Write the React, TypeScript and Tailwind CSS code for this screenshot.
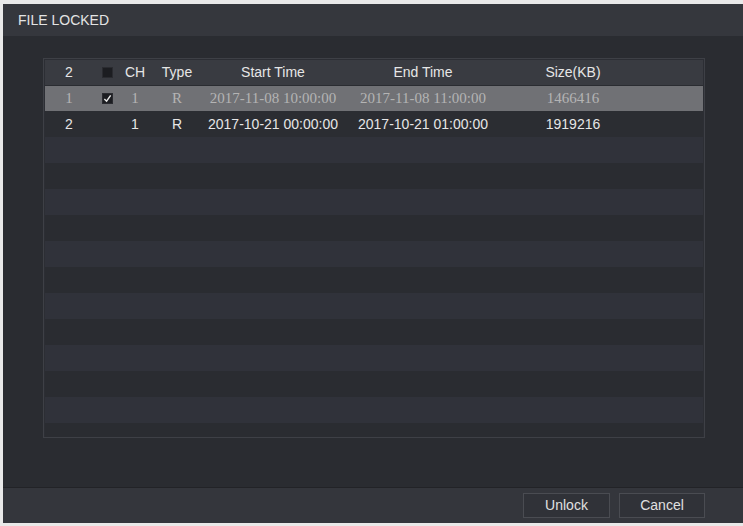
import React from "react";

const cols = [
  "w-[48px]",
  "w-[28px]",
  "w-[28px]",
  "w-[56px]",
  "w-[136px]",
  "w-[164px]",
  "w-[136px]",
];

const Checkbox = ({ checked }: { checked?: boolean }) => (
  <div className="w-[11px] h-[11px] bg-[#1c1d21] border border-[#2a2b30] flex items-center justify-center">
    {checked && (
      <svg width="9" height="9" viewBox="0 0 10 10">
        <path d="M1.5 5.5 L4 8 L8.5 1.5" stroke="#e6e6e6" strokeWidth="1.6" fill="none" />
      </svg>
    )}
  </div>
);

const Row = ({ cells, className }: { cells: React.ReactNode[]; className: string }) => (
  <div className={`flex items-center h-[26px] shrink-0 ${className}`}>
    {cells.map((c, i) => (
      <div key={i} className={`${cols[i]} flex justify-center whitespace-nowrap`}>
        {c}
      </div>
    ))}
  </div>
);

const App = () => {
  const filler = Array.from({ length: 13 }, (_, i) => i);

  return (
    <div
      className="w-[743px] h-[526px] bg-[#e9e9e9] pt-[4px] pl-[3px] pb-[3px] overflow-hidden"
      style={{ fontFamily: '"Liberation Sans", Arial, sans-serif' }}
    >
      <div className="w-full h-full flex flex-col bg-[#2a2c31]">
        {/* title */}
        <div className="h-[32px] bg-[#35373d] flex items-center pl-[15px] text-[14px] text-[#e4e4e4] shrink-0">
          FILE LOCKED
        </div>

        {/* body */}
        <div className="flex-1 pl-[40px] pt-[22px]">
          <div className="w-[662px] h-[380px] border border-[#3e4046] bg-[#2c2e34] flex flex-col overflow-hidden p-px text-[14px] text-[#e6e6e6]">
            <Row
              className="bg-[#393b41] border-b border-[#2a2c31]"
              cells={["2", <Checkbox />, "CH", "Type", "Start Time", "End Time", "Size(KB)"]}
            />
            <div
              className="flex items-center h-[25px] shrink-0 bg-[#707175] text-[#b4b4b4] text-[15px]"
              style={{ fontFamily: '"Liberation Serif", "Times New Roman", serif' }}
            >
              {["1", <Checkbox checked />, "1", "R", "2017-11-08 10:00:00", "2017-11-08 11:00:00", "1466416"].map(
                (c, i) => (
                  <div key={i} className={`${cols[i]} flex justify-center whitespace-nowrap`}>
                    {c}
                  </div>
                )
              )}
            </div>
            <Row
              className="bg-[#2b2d32]"
              cells={["2", "", "1", "R", "2017-10-21 00:00:00", "2017-10-21 01:00:00", "1919216"]}
            />
            {filler.map((i) => (
              <div
                key={i}
                className={`h-[26px] shrink-0 ${i % 2 === 0 ? "bg-[#30323a]" : "bg-[#2a2c31]"}`}
              />
            ))}
          </div>
        </div>

        {/* footer */}
        <div className="h-[36px] shrink-0 bg-[#34363c] border-t border-[#222327] flex items-center justify-end gap-[9px] pr-[38px]">
          <button className="w-[87px] h-[25px] border border-[#4a4c52] bg-[#303238] text-[14px] text-[#e0e0e0]">
            Unlock
          </button>
          <button className="w-[86px] h-[25px] border border-[#4a4c52] bg-[#303238] text-[14px] text-[#e0e0e0]">
            Cancel
          </button>
        </div>
      </div>
    </div>
  );
};

export default App;
